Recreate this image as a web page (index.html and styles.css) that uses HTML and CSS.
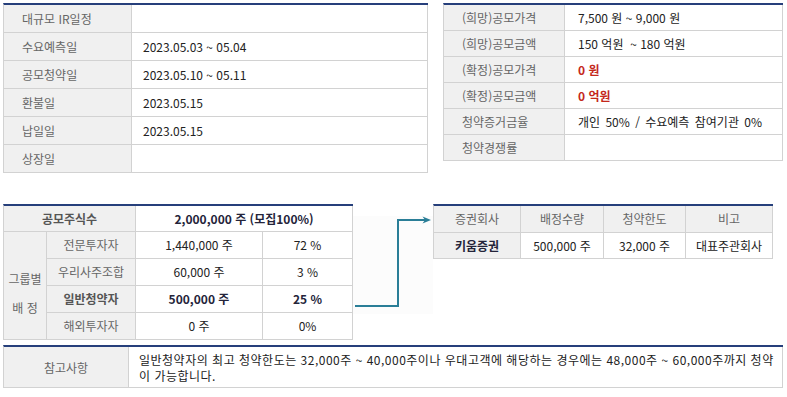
FILE: index.html
```html
<!DOCTYPE html>
<html lang="ko">
<head>
<meta charset="utf-8">
<title>공모 정보</title>
<link rel="stylesheet" href="styles.css">
</head>
<body>
<div class="page">
  <div class="row-top">
    <table class="tbl tbl-schedule">
      <colgroup><col class="c-sl"><col class="c-sv"></colgroup>
      <tr><th>대규모 IR일정</th><td></td></tr>
      <tr><th>수요예측일</th><td>2023.05.03 ~ 05.04</td></tr>
      <tr><th>공모청약일</th><td>2023.05.10 ~ 05.11</td></tr>
      <tr><th>환불일</th><td>2023.05.15</td></tr>
      <tr><th>납일일</th><td>2023.05.15</td></tr>
      <tr><th>상장일</th><td></td></tr>
    </table>
    <table class="tbl tbl-price">
      <colgroup><col class="c-pl"><col class="c-pv"></colgroup>
      <tr><th>(희망)공모가격</th><td>7,500 원 ~ 9,000 원</td></tr>
      <tr><th>(희망)공모금액</th><td>150 억원 &nbsp;~ 180 억원</td></tr>
      <tr><th>(확정)공모가격</th><td class="red">0 원</td></tr>
      <tr><th>(확정)공모금액</th><td class="red">0 억원</td></tr>
      <tr><th>청약증거금율</th><td class="wide">개인 50% / 수요예측 참여기관 0%</td></tr>
      <tr><th>청약경쟁률</th><td></td></tr>
    </table>
  </div>

  <div class="row-mid">
    <table class="tbl tbl-alloc">
      <colgroup><col class="c-a1"><col class="c-a2"><col class="c-a3"><col class="c-a4"></colgroup>
      <tr class="r-head"><th colspan="2" class="b">공모주식수</th><td colspan="2" class="b dark">2,000,000 주 (모집100%)</td></tr>
      <tr><th rowspan="4" class="group"><div class="gl">그룹별</div><div class="gl">배 정</div></th><th>전문투자자</th><td>1,440,000 주</td><td>72 %</td></tr>
      <tr><th>우리사주조합</th><td>60,000 주</td><td>3 %</td></tr>
      <tr><th class="b">일반청약자</th><td class="b dark">500,000 주</td><td class="b dark">25 %</td></tr>
      <tr><th>해외투자자</th><td>0 주</td><td>0%</td></tr>
    </table>

    <svg class="arrow" width="80" height="98" viewBox="0 0 80 98" aria-hidden="true">
      <path d="M2 90 H45 V4 H73" fill="none" stroke="#2a7e97" stroke-width="2"/>
      <polygon points="69.5,0.5 78,4 69.5,7.5 72,4" fill="#2a7e97"/>
    </svg>

    <table class="tbl tbl-broker">
      <colgroup><col class="c-b1"><col class="c-b2"><col class="c-b3"><col class="c-b4"></colgroup>
      <tr class="r-h"><th>증권회사</th><th>배정수량</th><th>청약한도</th><th>비고</th></tr>
      <tr class="r-v"><th class="b dark">키움증권</th><td>500,000 주</td><td>32,000 주</td><td>대표주관회사</td></tr>
    </table>
  </div>

  <table class="tbl tbl-note">
    <colgroup><col class="c-n1"><col class="c-n2"></colgroup>
    <tr><th>참고사항</th><td>일반청약자의 최고 청약한도는 32,000주 ~ 40,000주이나 우대고객에 해당하는 경우에는 48,000주 ~ 60,000주까지 청약이 가능합니다.</td></tr>
  </table>
</div>
</body>
</html>
```
FILE: styles.css
```css
html, body {
  margin: 0;
  padding: 0;
  background: #ffffff;
}

body {
  font-family: "Noto Sans CJK KR", "Noto Sans", sans-serif;
  font-size: 12px;
  color: #333333;
}

.page {
  padding: 3px 0 0 3px;
}

.row-top {
  display: flex;
  align-items: flex-start;
  gap: 15px;
}

.row-mid {
  display: flex;
  align-items: flex-start;
  margin-top: 31px;
}

.tbl {
  border-collapse: separate;
  border-spacing: 0;
  table-layout: fixed;
  border-top: 2px solid #263f7b;
  border-left: 1px solid #d2d2d2;
}

.tbl th,
.tbl td {
  padding: 0;
  border-right: 1px solid #d2d2d2;
  border-bottom: 1px solid #d2d2d2;
  font-weight: normal;
  white-space: nowrap;
  vertical-align: middle;
}

.tbl th {
  background: #f0f0f0;
  color: #666666;
}

.tbl td {
  background: #ffffff;
  color: #222222;
}

.tbl .b {
  font-weight: bold;
  color: #555555;
}

.tbl .dark {
  color: #24243a;
}

/* schedule table */
.tbl-schedule { width: 425px; }
.c-sl { width: 128px; }
.c-sv { width: 296px; }
.tbl-schedule th,
.tbl-schedule td {
  line-height: 27px;
  text-align: left;
}
.tbl-schedule th { padding-left: 18px; }
.tbl-schedule td { padding-left: 11px; }

/* price table */
.tbl-price { width: 340px; }
.c-pl { width: 121px; }
.c-pv { width: 218px; }
.tbl-price th,
.tbl-price td {
  line-height: 25px;
  text-align: left;
}
.tbl-price th { padding-left: 18px; }
.tbl-price td { padding-left: 13px; }
.tbl-price td.red {
  color: #c4281c;
  font-weight: bold;
}
.tbl-price td.wide {
  word-spacing: 2px;
}

/* allocation table */
.tbl-alloc { width: 350px; }
.c-a1 { width: 43px; }
.c-a2 { width: 89px; }
.c-a3 { width: 127px; }
.c-a4 { width: 90px; }
.tbl-alloc th,
.tbl-alloc td {
  line-height: 26px;
  text-align: center;
}
.tbl-alloc .r-head th,
.tbl-alloc .r-head td {
  line-height: 25px;
}
.tbl-alloc th.group {
  padding-top: 14px;
  white-space: normal;
}
.gl {
  line-height: 29px;
}

/* arrow */
.arrow {
  display: block;
  margin-top: 12px;
  background: #fcfcfc;
  flex: none;
}

/* broker table */
.tbl-broker { width: 340px; }
.c-b1 { width: 87px; }
.c-b2 { width: 83px; }
.c-b3 { width: 82px; }
.c-b4 { width: 87px; }
.tbl-broker th,
.tbl-broker td {
  text-align: center;
}
.tbl-broker .r-h th { line-height: 26px; }
.tbl-broker .r-v th,
.tbl-broker .r-v td { line-height: 25px; }
.tbl-broker .r-v td { color: #222222; }

/* note table */
.tbl-note {
  width: 780px;
  margin-top: 5px;
}
.c-n1 { width: 125px; }
.c-n2 { width: 654px; }
.tbl-note th {
  text-align: center;
  height: 40px;
}
.tbl-note td {
  white-space: normal;
  text-align: left;
  line-height: 16px;
  padding: 5px 4px 3px 10px;
  letter-spacing: 0.5px;
}
```
